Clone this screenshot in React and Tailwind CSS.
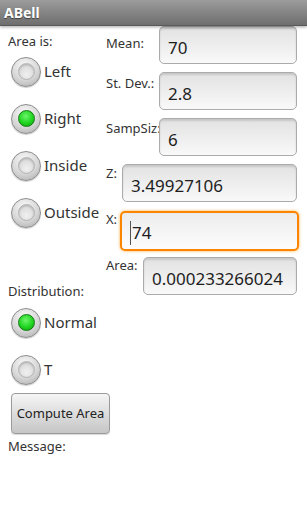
import React from 'react';

const font = { fontFamily: '"Noto Sans", "Open Sans", sans-serif' };

/* Android-style radio button (gray bead with optional green dot) */
const Radio = ({ label, checked }) => (
  <div className="h-[47px] flex items-center">
    <div className="ml-[3px] w-[30px] h-[30px] rounded-full border border-[#8e8e8e] bg-[radial-gradient(circle_at_45%_30%,#fbfbfb,#d6d6d6_55%,#a9a9a9)] flex items-center justify-center shadow-[0_1px_1px_rgba(0,0,0,0.2)]">
      {checked ? (
        <div className="w-[17px] h-[17px] rounded-full border border-[#127a12] bg-[radial-gradient(circle_at_45%_35%,#6cf56c,#1fd41f_55%,#109c10)]" />
      ) : (
        <div className="w-[17px] h-[17px] rounded-full border border-[#b4b4b4] bg-[radial-gradient(circle_at_50%_70%,#f0f0f0,#d2d2d2)] shadow-[inset_0_1px_2px_rgba(0,0,0,0.2)]" />
      )}
    </div>
    <span className="ml-[3px] text-[15px] text-[#333]">{label}</span>
  </div>
);

/* Unfocused edit text */
const Field = ({ value, className = '' }) => (
  <div
    className={`h-[38px] rounded-[5px] border border-[#ababab] bg-gradient-to-b from-[#e2e2e2] to-[#f9f9f9] shadow-[inset_0_2px_2px_rgba(0,0,0,0.12)] pl-[8px] pt-[4px] text-[17px] leading-[34px] text-[#1e1e1e] ${className}`}
  >
    {value}
  </div>
);

export default function App() {
  return (
    <div className="w-[307px] h-[512px] bg-white overflow-hidden" style={font}>
      {/* Title bar */}
      <header className="h-[26px] bg-gradient-to-b from-[#9c9c9c] to-[#6e6e6e] border-b border-[#5a5a5a] flex items-center px-[4px] shadow-[0_1px_3px_rgba(0,0,0,0.35)] relative z-10">
        <span className="text-white font-bold text-[14px] [text-shadow:0_1px_1px_rgba(0,0,0,0.5)]">ABell</span>
      </header>

      <div className="flex">
        {/* Left column */}
        <div className="w-[104px] pl-[8px] flex flex-col">
          <div className="h-[22px] pt-[8px] text-[13px] leading-[14px] text-[#333]">Area is:</div>
          <Radio label="Left" />
          <Radio label="Right" checked />
          <Radio label="Inside" />
          <Radio label="Outside" />

          <div className="mt-[47px] h-[16px] text-[13px] leading-[16px] text-[#333]">Distribution:</div>
          <Radio label="Normal" checked />
          <Radio label="T" />

          <button className="ml-[3px] w-[99px] h-[41px] rounded-[4px] border border-[#9b9b9b] bg-gradient-to-b from-[#f5f5f5] to-[#c6c6c6] text-[13px] text-[#222] shadow-[0_1px_1px_rgba(0,0,0,0.15)]">
            Compute Area
          </button>
          <div className="mt-[5px] text-[13px] leading-[15px] text-[#333]">Message:</div>
        </div>

        {/* Right column */}
        <div className="flex-1 pl-[2px] flex flex-col">
          <div className="grid grid-cols-[53px_138px] gap-y-[8px]">
            <div className="pt-[9px] text-[13px] leading-[16px] text-[#333]">Mean:</div>
            <Field value="70" />
            <div className="pt-[3px] text-[13px] leading-[16px] text-[#333]">St. Dev.:</div>
            <Field value="2.8" />
            <div className="pt-[2px] text-[13px] leading-[16px] text-[#333] whitespace-nowrap">SampSiz:</div>
            <Field value="6" />
          </div>

          <div className="mt-[8px] grid grid-cols-[14px_179px]">
            <div className="pt-[1px] text-[13px] leading-[16px] text-[#333]">Z:</div>
            <Field value="3.49927106" className="mx-[2px]" />
            <div className="mt-[9px] text-[13px] leading-[16px] text-[#333]">X:</div>
            <div className="mt-[9px] h-[40px] rounded-[5px] border-2 border-[#fb8500] bg-gradient-to-b from-[#ececec] to-[#fdfdfd] shadow-[0_0_3px_rgba(255,150,0,0.8)] pl-[8px] pt-[4px] flex items-center text-[17px] text-[#1e1e1e]">
              <span className="w-[1px] h-[24px] bg-[#555] mr-[1px]" />
              74
            </div>
          </div>

          <div className="mt-[6px] grid grid-cols-[37px_154px]">
            <div className="text-[13px] leading-[16px] text-[#333]">Area:</div>
            <Field value="0.000233266024" className="pl-[7px]" />
          </div>
        </div>
      </div>
    </div>
  );
}
